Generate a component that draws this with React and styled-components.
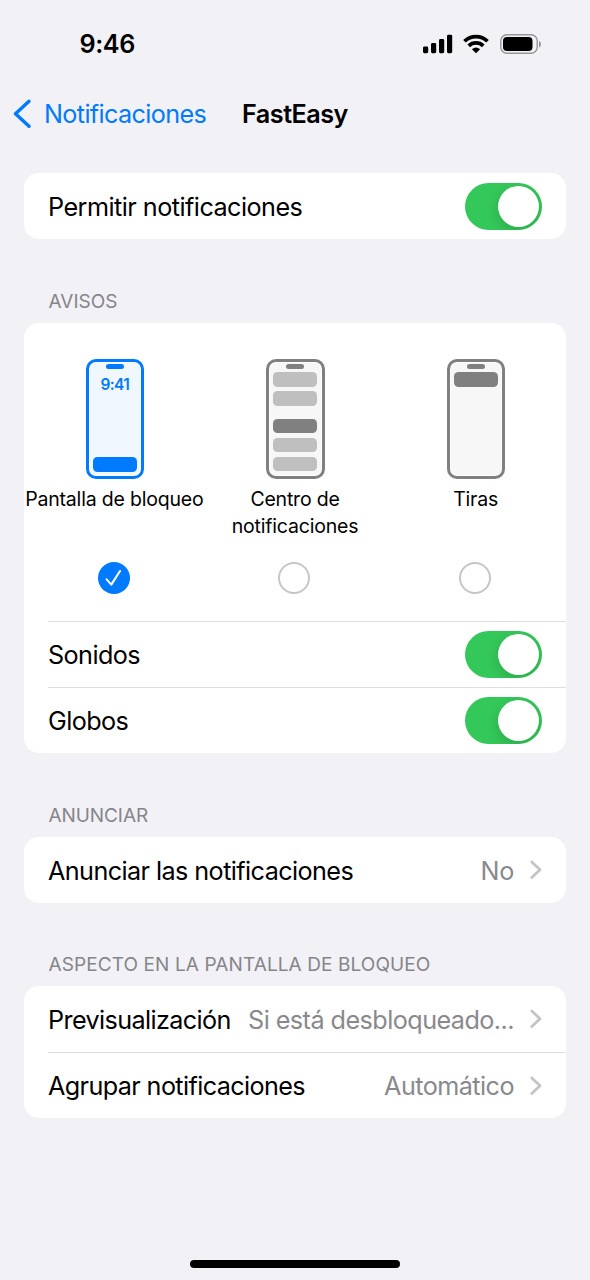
import React, { useState } from "react";
import styled, { createGlobalStyle } from "styled-components";

const GlobalStyle = createGlobalStyle`
  * {
    box-sizing: border-box;
  }
  body {
    margin: 0;
    background: #f2f1f6;
  }
`;

const Screen = styled.div`
  display: flex;
  flex-direction: column;
  width: 590px;
  height: 1280px;
  overflow: hidden;
  background: #f2f1f6;
  color: #000;
  font-family: Inter, "Liberation Sans", sans-serif;
`;

const Text = styled.span`
  font-size: ${({ $size }) => $size || 25.2}px;
  font-weight: ${({ $weight }) => $weight || 400};
  letter-spacing: ${({ $track }) => $track ?? -0.58}px;
  color: ${({ $color }) => $color || "inherit"};
  white-space: nowrap;
`;

const StatusBar = styled.header`
  display: flex;
  align-items: center;
  justify-content: space-between;
  height: 88px;
  padding: 0 48px 0 79.5px;
`;

const StatusIcons = styled.div`
  display: flex;
  align-items: center;
`;

const NavBar = styled.nav`
  display: flex;
  align-items: center;
  height: 52px;
  padding-left: 13px;
`;

const BackButton = styled.button`
  display: flex;
  align-items: center;
  gap: 12px;
  width: 229px;
  padding: 0;
  border: 0;
  background: none;
  color: #007aff;
  font: inherit;
  cursor: pointer;
`;

const Content = styled.main`
  display: flex;
  flex: 1;
  flex-direction: column;
  padding: 33px 24px 0;
`;

const SectionTitle = styled.h2`
  display: flex;
  align-items: flex-end;
  height: ${({ $height }) => $height}px;
  margin: 0;
  padding: 0 24.5px 9.5px;
  line-height: 25px;
`;

const Card = styled.section`
  flex: none;
  overflow: hidden;
  border-radius: 15px;
  background: #fff;
`;

const Row = styled.div`
  display: flex;
  align-items: center;
  justify-content: space-between;
  height: 66px;
  margin-left: 24px;
  padding-right: 24px;
  border-top: ${({ $divided }) => ($divided ? "1px solid #dedee0" : "0")};
`;

const RowText = styled(Text)`
  padding-top: 1px;
  line-height: 32px;
`;

const RowValue = styled.div`
  display: flex;
  align-items: center;
  gap: 16px;
`;

const Track = styled.button`
  display: flex;
  justify-content: ${({ $on }) => ($on ? "flex-end" : "flex-start")};
  width: 77px;
  height: 47px;
  padding: 3px;
  border: 0;
  border-radius: 24px;
  background: ${({ $on }) => ($on ? "#34c759" : "#e9e9eb")};
  overflow: hidden;
  cursor: pointer;
`;

const Knob = styled.span`
  width: 41px;
  height: 41px;
  border-radius: 50%;
  background: #fff;
  box-shadow: 0 4px 12px rgba(0, 0, 0, 0.15);
`;

const AlertStyles = styled.div`
  display: grid;
  grid-template-columns: repeat(3, 1fr);
  height: 298px;
  padding-top: 36px;
`;

const AlertOption = styled.div`
  display: flex;
  flex-direction: column;
  align-items: center;
  cursor: pointer;
`;

const AlertLabel = styled.div`
  display: flex;
  flex-direction: column;
  align-items: center;
  height: 54px;
  margin: 7px 0 22px;
  line-height: 27px;
`;

const Phone = styled.div`
  display: flex;
  flex-direction: column;
  align-items: center;
  width: 58.5px;
  height: 120px;
  margin-left: 1px;
  padding-top: 2px;
  border: 3px solid ${({ $active }) => ($active ? "#007aff" : "#808080")};
  border-radius: 10px;
  background: ${({ $active }) => ($active ? "#f0f7ff" : "#f7f7f7")};
  box-shadow: inset 0 0 0 1px #fff;
`;

const Notch = styled.div`
  flex: none;
  width: 18px;
  height: 5px;
  border-radius: 2.5px;
  background: ${({ $active }) => ($active ? "#007aff" : "#808080")};
`;

const Banner = styled.div`
  flex: none;
  width: 44px;
  height: 14.5px;
  margin-top: ${({ $gap }) => $gap}px;
  border-radius: 4.5px;
  background: ${({ $tone }) => $tone};
`;

const PhoneClock = styled.div`
  height: 20px;
  margin-top: 6px;
  color: #007aff;
  font-size: 15.5px;
  font-weight: 600;
  letter-spacing: -0.6px;
  line-height: 20px;
`;

const Radio = styled.div`
  display: flex;
  align-items: center;
  justify-content: center;
  width: 32px;
  height: 32px;
  margin-right: 1px;
  border: ${({ $checked }) => ($checked ? "0" : "2px solid #c6c6c8")};
  border-radius: 50%;
  background: ${({ $checked }) => ($checked ? "#007aff" : "#fff")};
`;

const HomeBar = styled.div`
  flex: none;
  align-self: center;
  width: 210px;
  height: 8px;
  margin-bottom: 12px;
  border-radius: 4px;
  background: #000;
`;

const Signal = () => (
  <svg width="30" height="20" viewBox="0 0 30 20">
    <rect x="0" y="12.5" width="5.2" height="6.7" rx="1.4" />
    <rect x="8" y="9" width="5.2" height="10.2" rx="1.4" />
    <rect x="16" y="5" width="5.2" height="14.2" rx="1.4" />
    <rect x="24" y="0.8" width="5.2" height="18.4" rx="1.4" />
  </svg>
);

const WifiIcon = styled.svg`
  margin: 0 11px 0 10px;
`;

const Wifi = () => (
  <WifiIcon width="26" height="20" viewBox="0 0 26 20">
    <g fill="none" stroke="#000" strokeWidth="3.7">
      <path d="M1.5 7.3a16.4 16.4 0 0 1 23 0" />
      <path d="M5.7 11.9a10.5 10.5 0 0 1 14.6 0" />
    </g>
    <path d="M8.9 15.2a6.3 6.3 0 0 1 8.2 0L13 19.3z" />
  </WifiIcon>
);

const Battery = () => (
  <svg width="42" height="20" viewBox="0 0 42 20">
    <rect
      x="0.8"
      y="0.8"
      width="36.4"
      height="18.4"
      rx="6"
      fill="none"
      stroke="#97969a"
      strokeWidth="1.4"
    />
    <rect x="3" y="3" width="29.5" height="14" rx="4" />
    <path d="M39 7v6.4c1.3-.5 2-1.8 2-3.2s-.7-2.7-2-3.2z" fill="#97969a" />
  </svg>
);

const BackChevron = () => (
  <svg width="19" height="30" viewBox="0 0 19 30" fill="none">
    <path
      d="M16 2.3 2.5 14.8 16 27.3"
      stroke="#007aff"
      strokeWidth="3.4"
      strokeLinecap="round"
      strokeLinejoin="round"
    />
  </svg>
);

const Chevron = () => (
  <svg width="12" height="20" viewBox="0 0 12 20" fill="none">
    <path
      d="m1.8 2 8.2 7.8-8.2 7.8"
      stroke="#c4c4c6"
      strokeWidth="2.8"
      strokeLinecap="round"
      strokeLinejoin="round"
    />
  </svg>
);

const Check = () => (
  <svg width="17" height="18" viewBox="0 0 17 18" fill="none">
    <path
      d="m1.6 10.4 4.7 5.2L15 2"
      stroke="#fff"
      strokeWidth="2.1"
      strokeLinecap="round"
      strokeLinejoin="round"
    />
  </svg>
);

const ToggleRow = ({ label, track, divided }) => {
  const [on, setOn] = useState(true);

  return (
    <Row $divided={divided}>
      <RowText $track={track}>{label}</RowText>
      <Track $on={on} onClick={() => setOn(!on)}>
        <Knob />
      </Track>
    </Row>
  );
};

const LinkRow = ({ label, track, value, valueTrack, divided }) => (
  <Row $divided={divided}>
    <RowText $track={track}>{label}</RowText>
    <RowValue>
      <RowText $track={valueTrack} $color="#89898d">
        {value}
      </RowText>
      <Chevron />
    </RowValue>
  </Row>
);

const GREY = "#bfbfbf";
const DARK = "#808080";

const options = [
  {
    id: "lock",
    lines: ["Pantalla de bloqueo"],
    banners: [{ gap: 62, tone: "#007aff" }],
    clock: true,
  },
  {
    id: "center",
    lines: ["Centro de", "notificaciones"],
    banners: [
      { gap: 3, tone: GREY },
      { gap: 4.5, tone: GREY },
      { gap: 13, tone: DARK },
      { gap: 4.5, tone: GREY },
      { gap: 4.5, tone: GREY },
    ],
  },
  {
    id: "banners",
    lines: ["Tiras"],
    banners: [{ gap: 3, tone: DARK }],
  },
];

const App = () => {
  const [selected, setSelected] = useState("lock");

  return (
    <Screen>
      <GlobalStyle />
      <StatusBar>
        <Text $size={25.2} $weight={600} $track={-0.4}>
          9:46
        </Text>
        <StatusIcons>
          <Signal />
          <Wifi />
          <Battery />
        </StatusIcons>
      </StatusBar>
      <NavBar>
        <BackButton>
          <BackChevron />
          <Text $track={-0.64}>Notificaciones</Text>
        </BackButton>
        <Text $weight={600} $track={-0.5}>
          FastEasy
        </Text>
      </NavBar>
      <Content>
        <Card>
          <ToggleRow label="Permitir notificaciones" track={-0.53} />
        </Card>

        <SectionTitle $height={84}>
          <Text $size={19} $track={0} $color="#85858a">
            AVISOS
          </Text>
        </SectionTitle>
        <Card>
          <AlertStyles>
            {options.map((option) => (
              <AlertOption
                key={option.id}
                onClick={() => setSelected(option.id)}
              >
                <Phone $active={option.clock}>
                  <Notch $active={option.clock} />
                  {option.clock && <PhoneClock>9:41</PhoneClock>}
                  {option.banners.map((banner, i) => (
                    <Banner key={i} $gap={banner.gap} $tone={banner.tone} />
                  ))}
                </Phone>
                <AlertLabel>
                  {option.lines.map((line) => (
                    <Text key={line} $size={19.5} $track={-0.2}>
                      {line}
                    </Text>
                  ))}
                </AlertLabel>
                <Radio $checked={selected === option.id}>
                  {selected === option.id && <Check />}
                </Radio>
              </AlertOption>
            ))}
          </AlertStyles>
          <ToggleRow label="Sonidos" divided />
          <ToggleRow label="Globos" divided />
        </Card>

        <SectionTitle $height={84}>
          <Text $size={19} $track={-0.08} $color="#85858a">
            ANUNCIAR
          </Text>
        </SectionTitle>
        <Card>
          <LinkRow
            label="Anunciar las notificaciones"
            value="No"
            valueTrack={-0.35}
          />
        </Card>

        <SectionTitle $height={83.4}>
          <Text $size={19} $track={0.1} $color="#85858a">
            ASPECTO EN LA PANTALLA DE BLOQUEO
          </Text>
        </SectionTitle>
        <Card>
          <LinkRow
            label="Previsualización"
            track={-0.62}
            value="Si está desbloqueado..."
            valueTrack={-0.55}
          />
          <LinkRow
            label="Agrupar notificaciones"
            track={-0.62}
            value="Automático"
            valueTrack={-0.55}
            divided
          />
        </Card>
      </Content>
      <HomeBar />
    </Screen>
  );
};

export default App;
